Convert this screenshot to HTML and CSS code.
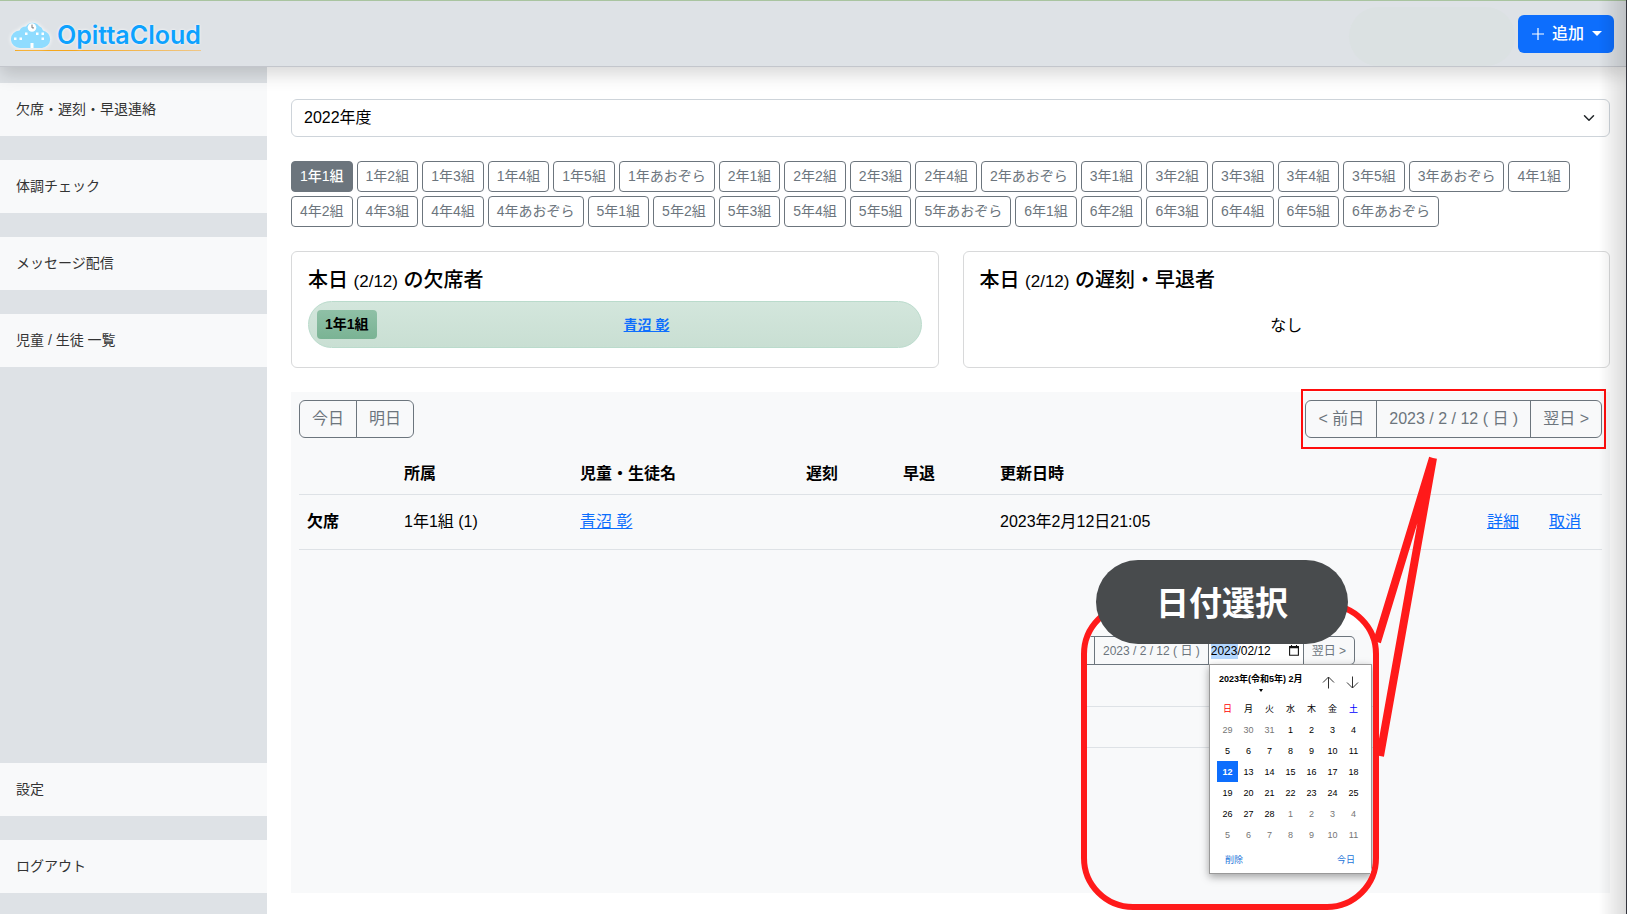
FILE: index.html
```html
<!DOCTYPE html>
<html lang="ja">
<head>
<meta charset="utf-8">
<title>OpittaCloud</title>
<meta name="viewport" content="width=device-width, initial-scale=1">
<link rel="stylesheet" href="styles.css">
</head>
<body>
<header class="topbar">
  <a class="brand" href="#">
    <svg class="brand-mark" width="40" height="28" viewBox="0 0 40 28" aria-hidden="true">
      <path d="M9 27a8.800 8.800 0 0 1-.500-17.600 7 7 0 0 1 6.500-3.900A7.800 7.800 0 0 1 28 4.900a6.500 6.500 0 0 1 4 4.500A8.900 8.900 0 0 1 31 27z" fill="#8fdcff"/>
      <circle cx="21" cy="6.500" r="4.300" fill="#fff"/>
      <path d="M21 3.600v3.300h2" fill="none" stroke="#777" stroke-width="1"/>
      <g fill="#fff"><path d="M3 16.500h2.500V19H3zM8.500 16.500H11V19H8.500zM14 11.500h2.500V14H14zM25 11.500h2.500V14H25zM30.500 11.500H33V14h-2.500zM30.500 16.500H33V19h-2.500zM19.500 22h3v5h-3z"/></g>
    </svg>
    <span class="brand-name">OpittaCloud</span>
  </a>
  <div class="topbar-right">
    <span class="account"></span>
    <button class="btn-add" type="button">
      <svg width="16" height="16" viewBox="0 0 16 16" aria-hidden="true"><path d="M8 2v12M2 8h12" stroke="#fff" stroke-width="1.200"/></svg>
      <span>追加</span>
      <span class="caret"></span>
    </button>
  </div>
</header>
<div class="layout">
  <nav class="sidebar">
    <a href="#">欠席・遅刻・早退連絡</a>
    <a href="#">体調チェック</a>
    <a href="#">メッセージ配信</a>
    <a href="#">児童 / 生徒 一覧</a>
    <a class="push" href="#">設定</a>
    <a href="#">ログアウト</a>
  </nav>
  <main class="main">
    <div class="year">
      <select class="year-select" aria-label="年度"><option>2022年度</option></select>
      <svg class="year-chevron" width="16" height="12" viewBox="0 0 16 16" aria-hidden="true"><path d="M2 5l6 6 6-6" fill="none" stroke="#212529" stroke-width="2" stroke-linecap="round" stroke-linejoin="round"/></svg>
    </div>
    <div class="classes">
      <button type="button" class="active">1年1組</button>
      <button type="button">1年2組</button>
      <button type="button">1年3組</button>
      <button type="button">1年4組</button>
      <button type="button">1年5組</button>
      <button type="button">1年あおぞら</button>
      <button type="button">2年1組</button>
      <button type="button">2年2組</button>
      <button type="button">2年3組</button>
      <button type="button">2年4組</button>
      <button type="button">2年あおぞら</button>
      <button type="button">3年1組</button>
      <button type="button">3年2組</button>
      <button type="button">3年3組</button>
      <button type="button">3年4組</button>
      <button type="button">3年5組</button>
      <button type="button">3年あおぞら</button>
      <button type="button">4年1組</button>
      <button type="button">4年2組</button>
      <button type="button">4年3組</button>
      <button type="button">4年4組</button>
      <button type="button">4年あおぞら</button>
      <button type="button">5年1組</button>
      <button type="button">5年2組</button>
      <button type="button">5年3組</button>
      <button type="button">5年4組</button>
      <button type="button">5年5組</button>
      <button type="button">5年あおぞら</button>
      <button type="button">6年1組</button>
      <button type="button">6年2組</button>
      <button type="button">6年3組</button>
      <button type="button">6年4組</button>
      <button type="button">6年5組</button>
      <button type="button">6年あおぞら</button>
    </div>
    <div class="cards">
      <section class="card">
        <h2>本日 <small>(2/12)</small> の欠席者</h2>
        <div class="absent">
          <span class="tag">1年1組</span>
          <a href="#">青沼 彰</a>
        </div>
      </section>
      <section class="card">
        <h2>本日 <small>(2/12)</small> の遅刻・早退者</h2>
        <p class="none">なし</p>
      </section>
    </div>
    <section class="panel">
      <div class="toolbar">
        <div class="group"><button type="button">今日</button><button type="button">明日</button></div>
        <div class="group marked"><button type="button">&lt; 前日</button><button type="button">2023 / 2 / 12 ( 日 )</button><button type="button">翌日 &gt;</button></div>
      </div>
      <table class="records">
        <colgroup><col class="c-kind"><col class="c-class"><col class="c-name"><col class="c-late"><col class="c-early"><col class="c-time"><col class="c-act"></colgroup>
        <thead><tr><th></th><th>所属</th><th>児童・生徒名</th><th>遅刻</th><th>早退</th><th>更新日時</th><th></th></tr></thead>
        <tbody><tr><th scope="row">欠席</th><td>1年1組 (1)</td><td><a href="#">青沼 彰</a></td><td></td><td></td><td>2023年2月12日21:05</td><td><div class="actions"><a href="#">詳細</a><a href="#">取消</a></div></td></tr></tbody>
      </table>

      <aside class="callout">
        <div class="frame">
          <div class="preview">
            <div class="mini"><span class="mini-tail"></span><button type="button">2023 / 2 / 12 ( 日 )</button><label class="mini-date"><input type="text" value="2023/02/12" aria-label="日付"><svg width="10" height="11" viewBox="0 0 10 11" aria-hidden="true"><path d="M.600 1.500h8.800v8.800H.600zM2.500 0v2M7.500 0v2" fill="none" stroke="#111" stroke-width="1.100"/><path d="M.500 1.500h9v1.700h-9z" fill="#111"/></svg></label><button type="button" class="last">翌日 &gt;</button></div>
            <div class="lines"><i></i><i></i></div>
          </div>
          <div class="picker">
            <div class="picker-head">
              <button type="button" class="month">2023年(令和5年) 2月<span></span></button>
              <button type="button" class="arrow" aria-label="前の月"><svg width="13" height="13" viewBox="0 0 13 13"><path d="M6.500 12.500V1M1 6.500L6.500 1 12 6.500" fill="none" stroke="#333"/></svg></button>
              <button type="button" class="arrow" aria-label="次の月"><svg width="13" height="13" viewBox="0 0 13 13"><path d="M6.500.500V12M1 6.500L6.500 12 12 6.500" fill="none" stroke="#333"/></svg></button>
            </div>
            <table class="days">
              <thead><tr><th class="sun">日</th><th>月</th><th>火</th><th>水</th><th>木</th><th>金</th><th class="sat">土</th></tr></thead>
              <tbody>
                <tr><td class="out">29</td><td class="out">30</td><td class="out">31</td><td>1</td><td>2</td><td>3</td><td>4</td></tr>
                <tr><td>5</td><td>6</td><td>7</td><td>8</td><td>9</td><td>10</td><td>11</td></tr>
                <tr><td class="picked">12</td><td>13</td><td>14</td><td>15</td><td>16</td><td>17</td><td>18</td></tr>
                <tr><td>19</td><td>20</td><td>21</td><td>22</td><td>23</td><td>24</td><td>25</td></tr>
                <tr><td>26</td><td>27</td><td>28</td><td class="out">1</td><td class="out">2</td><td class="out">3</td><td class="out">4</td></tr>
                <tr><td class="out">5</td><td class="out">6</td><td class="out">7</td><td class="out">8</td><td class="out">9</td><td class="out">10</td><td class="out">11</td></tr>
              </tbody>
            </table>
            <div class="picker-foot"><button type="button">削除</button><button type="button">今日</button></div>
          </div>
        </div>
        <svg class="pointer" width="359" height="454" viewBox="0 0 359 454" aria-hidden="true"><path d="M352 2L296 186M352 2L299 300" stroke="#ff1a1a" stroke-width="8" fill="none"/></svg>
        <strong class="callout-title">日付選択</strong>
      </aside>
    </section>
  </main>
</div>
<div class="edge"></div>
</body>
</html>
```
FILE: styles.css
```css
* { box-sizing: border-box; }
body {
  margin: 0;
  min-height: 100vh;
  display: flex;
  flex-direction: column;
  font-family: "Liberation Sans", "Noto Sans CJK JP", sans-serif;
  font-size: 16px;
  line-height: 24px;
  color: #000;
  background: #fff;
}
button, input, select { font: inherit; color: inherit; margin: 0; }
button { cursor: pointer; white-space: nowrap; }
a { color: #0d6efd; }

.topbar {
  position: relative;
  z-index: 2;
  height: 67px;
  padding: 0 13px 0 11px;
  display: flex;
  align-items: center;
  justify-content: space-between;
  background: #dee2e6;
  border-top: 1px solid #a9c4a0;
  border-bottom: 1px solid #c3c6cc;
  box-shadow: 0 8px 16px rgba(0, 0, 0, .15);
}
.brand {
  display: flex;
  align-items: center;
  gap: 6px;
  margin-top: 4px;
  padding-bottom: 2px;
  text-decoration: none;
  background: linear-gradient(90deg, #f5a71c 30%, #efc88c) 4px 100% / 100% 1px no-repeat;
}
.brand-mark { filter: drop-shadow(0 0 2px #fff); }
.brand-name {
  font-family: Inter, sans-serif;
  font-weight: 600;
  font-size: 25px;
  line-height: 28px;
  color: #0da2ff;
  text-shadow: 0 0 3px #fff;
}
.topbar-right { display: flex; align-items: center; height: 100%; }
.account {
  align-self: flex-end;
  width: 166px;
  height: 59px;
  border-radius: 50px;
  background: #dbe1e2;
  margin-right: 3px;
}
.btn-add {
  display: flex;
  align-items: center;
  height: 38px;
  padding: 0 12px;
  gap: 6px;
  border: 0;
  border-radius: 6px;
  background: #0d6efd;
  color: #fff;
  font-weight: 500;
}
.caret {
  margin-left: 2px;
  border: 5px solid transparent;
  border-top-color: #fff;
  border-bottom: 0;
}

.layout { flex: 1; display: flex; }
.sidebar {
  flex: 0 0 267px;
  display: flex;
  flex-direction: column;
  gap: 24px;
  padding: 16px 0 21px;
  background: #dee2e6;
}
.sidebar a {
  padding: 16px;
  font-size: 14px;
  line-height: 21px;
  color: #333;
  text-decoration: none;
  background: #f8f9fa;
}
.sidebar .push { margin-top: auto; }

.main {
  flex: 1;
  min-width: 0;
  display: flex;
  flex-direction: column;
  gap: 24px;
  padding: 32px 17px 21px 24px;
}
.year { position: relative; }
.year-select {
  display: block;
  width: 100%;
  height: 38px;
  padding: 0 12px;
  border: 1px solid #ced4da;
  border-radius: 6px;
  background: #fff;
  appearance: none;
}
.year-chevron { position: absolute; right: 13px; top: 13px; pointer-events: none; }
.classes { display: flex; flex-wrap: wrap; gap: 4px; }
.classes button {
  height: 31px;
  padding: 0 8px;
  font-size: 14px;
  line-height: 21px;
  color: #6c757d;
  background: #fff;
  border: 1px solid #6c757d;
  border-radius: 4px;
}
.classes .active { background: #6c757d; color: #fff; font-weight: 500; }

.cards { display: grid; grid-template-columns: 1fr 1fr; gap: 24px; }
.card {
  min-height: 117px;
  padding: 16px;
  border: 1px solid #d8d9da;
  border-radius: 6px;
}
.card h2 { margin: 0 0 7px; font-size: 20px; line-height: 24px; font-weight: 500; }
.card small { font-size: 17px; }
.absent {
  display: flex;
  align-items: center;
  gap: 4px;
  height: 47px;
  padding: 0 8px;
  border: 1px solid #badbcc;
  border-radius: 24px;
  background: linear-gradient(#d3e6dc, #c9dfd3);
  font-size: 14px;
  font-weight: 700;
}
.absent a { flex: 1; text-align: center; }
.tag {
  padding: 4px 8px;
  line-height: 21px;
  border-radius: 4px;
  background: linear-gradient(#8fc0a6, #7ab394);
  font-weight: 600;
}
.none { margin: 20px 0 0; text-align: center; }

.panel { position: relative; flex: 1; padding: 8px; background: #f8f9fa; }
.toolbar { display: flex; justify-content: space-between; margin-bottom: 16px; }
.group { display: flex; position: relative; }
.group button {
  height: 38px;
  padding: 0 12px;
  color: #6c757d;
  background: none;
  border: 1px solid #6c757d;
}
.group button + button { margin-left: -1px; }
.group button:first-child { border-radius: 6px 0 0 6px; }
.group button:last-child { border-radius: 0 6px 6px 0; }
.marked::after {
  content: "";
  position: absolute;
  inset: -11px -4px;
  border: 2px solid #ff0d0d;
  pointer-events: none;
}

.records { width: 100%; border-collapse: collapse; table-layout: fixed; }
.records th, .records td {
  padding: 8px;
  text-align: left;
  border-bottom: 1px solid #dee2e6;
}
.c-kind, .c-late, .c-early { width: 97px; }
.c-class { width: 176px; }
.c-name { width: 226px; }
.c-act { width: 136px; }
.actions { display: flex; gap: 4px; justify-content: flex-end; }
.actions a { padding: 7px 13px; white-space: nowrap; }

.callout { position: absolute; top: 64px; right: 170px; width: 359px; height: 454px; }
.frame {
  position: absolute;
  inset: 146px 61px 0 0;
  border: 6px solid #ff1a1a;
  border-radius: 52px;
  overflow: hidden;
  background: linear-gradient(#fff 22px, #f8f9fa 22px);
}
.preview { padding-top: 28px; }
.mini { display: flex; height: 29px; font-size: 12px; line-height: 16px; }
.mini-tail { width: 7px; border: solid #6c757d; border-width: 1px 0; }
.mini button {
  padding: 0 8px;
  color: #6c757d;
  background: none;
  border: 1px solid #6c757d;
}
.mini .last { border-radius: 0 5px 5px 0; border-left: 0; }
.mini-date { display: flex; align-items: center; width: 95px; padding-right: 4px; border: solid #6c757d; border-width: 1px 1px 1px 0; background: #fff; }
.mini-date input {
  flex: 1;
  min-width: 0;
  padding: 0 0 0 2px;
  border: 0;
  background: linear-gradient(#b3d7ff, #b3d7ff) 2px 0 / 27px 100% no-repeat;
}
.mini-date svg { flex: none; }
.lines { padding-top: 1px; }
.lines i { display: block; height: 41px; border-bottom: 1px solid #dee2e6; }

.picker {
  position: absolute;
  top: 56px;
  left: 122px;
  width: 163px;
  padding: 8px 8px 0 7px;
  height: 210px;
  background: #fff;
  border: 1px solid #999;
  box-shadow: 0 3px 8px rgba(0, 0, 0, .35);
  font-size: 9px;
  line-height: 12px;
}
.picker button { padding: 0; border: 0; background: none; }
.picker-head { display: flex; align-items: flex-start; gap: 11px; height: 25px; padding-right: 4px; }
.picker .month { position: relative; flex: 1; padding-left: 2px; text-align: left; font-weight: 700; }
.month span {
  position: absolute;
  left: 42px;
  top: 16px;
  border: 2px solid transparent;
  border-top: 3px solid #000;
  border-bottom: 0;
}
.arrow { height: 18px; display: flex; align-items: center; }
.days { width: 147px; border-collapse: collapse; table-layout: fixed; text-align: center; }
.days th, .days td { height: 21px; padding: 0; font-weight: 400; }
.days .sun { color: #f00; }
.days .sat { color: #00f; }
.days .out { color: #757575; }
.days .picked { background: #0d6efd; color: #fff; font-weight: 700; }
.picker-foot { display: flex; justify-content: space-between; padding: 9px 8px; color: #1a73d9; }
.pointer { position: absolute; inset: 0; }
.callout-title {
  position: absolute;
  top: 104px;
  left: 15px;
  width: 252px;
  height: 84px;
  padding-top: 2px;
  border-radius: 42px;
  background: #484b4d;
  color: #fff;
  font-size: 33px;
  line-height: 84px;
  text-align: center;
}

.edge {
  position: fixed;
  z-index: 3;
  top: 0;
  right: 0;
  bottom: 0;
  width: 28px;
  border-right: 1px solid #33343c;
  background: linear-gradient(90deg, transparent, rgba(0, 0, 0, .14));
  pointer-events: none;
}
```
